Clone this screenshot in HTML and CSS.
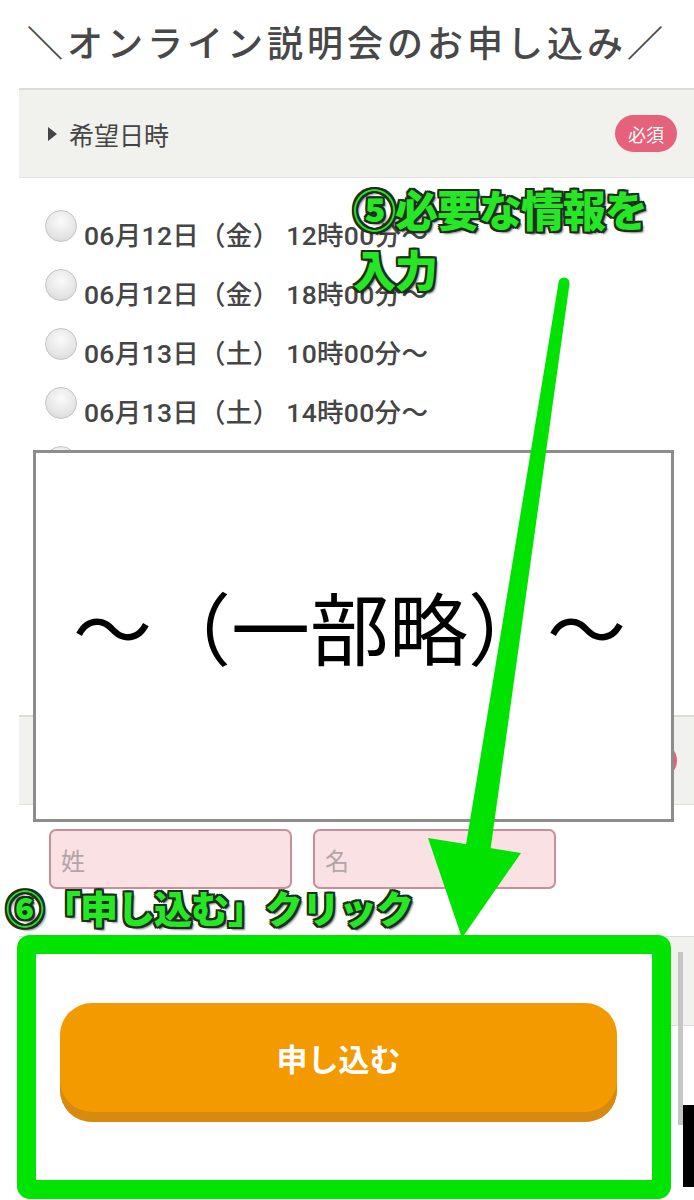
FILE: index.html
```html
<!DOCTYPE html>
<html lang="ja">
<head>
<meta charset="utf-8">
<title>オンライン説明会のお申し込み</title>
<link rel="stylesheet" href="styles.css">
</head>
<body>
<div class="page">
  <h1 class="title">＼オンライン説明会のお申し込み／</h1>

  <div class="field-head">
    <span class="caret"></span>
    <span class="field-label">希望日時</span>
    <span class="badge">必須</span>
  </div>

  <ul class="radio-list">
    <li class="radio-row"><span class="radio"></span><span class="radio-text">06月12日（金） 12時00分～</span></li>
    <li class="radio-row"><span class="radio"></span><span class="radio-text">06月12日（金） 18時00分～</span></li>
    <li class="radio-row"><span class="radio"></span><span class="radio-text">06月13日（土） 10時00分～</span></li>
    <li class="radio-row"><span class="radio"></span><span class="radio-text">06月13日（土） 14時00分～</span></li>
    <li class="radio-row"><span class="radio"></span></li>
  </ul>

  <div class="field-head">
    <span class="caret"></span>
    <span class="field-label"></span>
    <span class="badge"></span>
  </div>

  <div class="name-row">
    <div class="name-input">姓</div>
    <div class="name-input">名</div>
  </div>

  <div class="submit-section">
    <button class="submit-btn" type="button">申し込む</button>
  </div>

  <div class="scroll-bar"></div>
  <div class="black-block"></div>

  <div class="omit-box"><span class="omit-text">～（一部略）～</span></div>

  <div class="green-frame"></div>

  <svg class="arrow" width="694" height="1200" viewBox="0 0 694 1200">
    <circle cx="564" cy="283" r="5.5" fill="#00e200"/>
    <polygon points="558.5,283 569.5,284 489,860 464,857" fill="#00e200"/>
    <polygon points="428,838 521,853 462,938" fill="#00e200"/>
  </svg>

  <div class="note note-5">⑤必要な情報を<br>入力</div>
  <div class="note note-6">⑥「申し込む」クリック</div>
</div>
</body>
</html>
```

FILE: styles.css
```css
* { box-sizing: border-box; }

html, body {
  margin: 0;
  padding: 0;
  background: #fff;
}

.page {
  position: relative;
  width: 694px;
  height: 1200px;
  overflow: hidden;
  font-family: "Noto Sans CJK JP", "Noto Sans", sans-serif;
  color: #444;
}

.title {
  margin: 0;
  height: 88px;
  display: flex;
  align-items: center;
  justify-content: center;
  font-size: 36px;
  font-weight: 500;
  letter-spacing: 4px;
  color: #484848;
  padding-bottom: 6px;
}

.field-head {
  margin-left: 19px;
  height: 90px;
  background: #f1f1ed;
  border-top: 2px solid #dcdcd8;
  border-bottom: 1px solid #e2e2de;
  display: flex;
  align-items: center;
  padding-left: 29px;
  padding-right: 17px;
}

.caret {
  width: 0;
  height: 0;
  border-top: 7px solid transparent;
  border-bottom: 7px solid transparent;
  border-left: 9px solid #444;
  margin-right: 12px;
}

.field-label {
  font-size: 25px;
  color: #444;
  flex: 1;
}

.badge {
  width: 62px;
  height: 37px;
  border-radius: 19px;
  background: #e5627a;
  color: #fff;
  font-size: 18px;
  display: flex;
  align-items: center;
  justify-content: center;
}

.radio-list {
  list-style: none;
  margin: 0;
  padding: 24px 0 218px 45px;
}

.radio-row {
  height: 59px;
  display: flex;
  align-items: center;
}

.radio {
  width: 32px;
  height: 32px;
  border-radius: 50%;
  border: 1px solid #c4c4c4;
  background: radial-gradient(circle at 50% 35%, #fafafa 0%, #e6e6e6 60%, #d2d2d2 100%);
  margin-top: -12px;
  margin-right: 7px;
}

.radio-text {
  font-family: "Roboto", "Noto Sans CJK JP", sans-serif;
  font-size: 26.5px;
  font-weight: 500;
  letter-spacing: 0.3px;
  color: #454545;
  margin-top: 4px;
}

.name-row {
  display: flex;
  gap: 21px;
  padding: 24px 0 0 49px;
  height: 131px;
}

.name-input {
  width: 243px;
  height: 60px;
  border: 2px solid #c98f99;
  border-radius: 7px;
  background: #f9e1e4;
  color: #b3a5a7;
  font-size: 24px;
  display: flex;
  align-items: center;
  padding-left: 10px;
}

.submit-section {
  margin-left: 19px;
  height: 264px;
  border-top: 1px solid #dcdcd8;
  background: linear-gradient(#f1f1ed 0 88px, #dddddd 88px 89px, #ffffff 89px);
  padding: 66px 0 0 41px;
}

.submit-btn {
  position: relative;
  z-index: 4;
  width: 557px;
  height: 119px;
  border: none;
  border-radius: 32px;
  background: #f29a00;
  box-shadow: inset 0 -10px 0 #d88910;
  color: #fff;
  font-family: "Noto Sans CJK JP", sans-serif;
  font-size: 31px;
  font-weight: 700;
  padding: 0 0 10px 0;
}

.scroll-bar {
  position: absolute;
  left: 678px;
  top: 952px;
  width: 5px;
  height: 173px;
  background: #c6c6c6;
}

.black-block {
  position: absolute;
  left: 683px;
  top: 1105px;
  width: 11px;
  height: 82px;
  background: #000;
}

.omit-box {
  position: absolute;
  left: 33px;
  top: 450px;
  width: 641px;
  height: 372px;
  background: #fff;
  border: 3px solid #8d8d8d;
  z-index: 5;
  display: flex;
  align-items: center;
  justify-content: center;
  padding-bottom: 22px;
}

.omit-text {
  font-size: 79px;
  font-weight: 400;
  color: #000;
  line-height: 1;
  margin-left: -8px;
}

.green-frame {
  position: absolute;
  left: 17px;
  top: 935px;
  width: 654px;
  height: 264px;
  border: 19px solid #00e400;
  border-radius: 13px;
  background: #fff;
  z-index: 3;
}

.arrow {
  position: absolute;
  left: 0;
  top: 0;
  z-index: 6;
  pointer-events: none;
}

.note {
  position: absolute;
  z-index: 7;
  color: #26e626;
  font-weight: 900;
  font-family: "Noto Sans CJK JP", sans-serif;
  text-shadow:
    2px 0 0 #1a2e1a, -2px 0 0 #1a2e1a, 0 2px 0 #1a2e1a, 0 -2px 0 #1a2e1a,
    2px 2px 0 #1a2e1a, -2px -2px 0 #1a2e1a, 2px -2px 0 #1a2e1a, -2px 2px 0 #1a2e1a,
    3px 3px 2px rgba(0,0,0,0.5);
  white-space: nowrap;
}

.note-5 {
  left: 353px;
  top: 178px;
  font-size: 43px;
  line-height: 60px;
  letter-spacing: -1px;
}

.note-6 {
  left: 6px;
  top: 879px;
  font-size: 38px;
  line-height: 56px;
  letter-spacing: -1px;
}
```
